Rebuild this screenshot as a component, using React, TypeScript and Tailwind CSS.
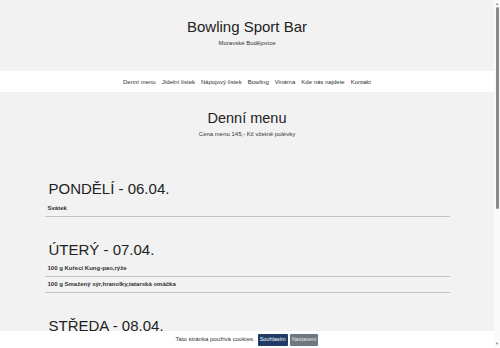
const navItems = ['Denní menu', 'Jídelní lístek', 'Nápojový lístek', 'Bowling', 'Vinárna', 'Kde nás najdete', 'Kontakt']

const days = [
  { name: 'PONDĚLÍ - 06.04.', items: ['Svátek'] },
  { name: 'ÚTERÝ - 07.04.', items: ['100 g Kuřecí Kung-pao,rýže', '100 g Smažený sýr,hranolky,tatarská omáčka'] },
  { name: 'STŘEDA - 08.04.', items: ['100 g Vepřový guláš,knedlík'] },
]

export default function App() {
  return (
    <div className="flex h-[348px] w-[500px] overflow-hidden bg-white font-['Liberation_Sans',Arial,sans-serif] text-[#222]">
      <div className="relative h-full flex-1 overflow-hidden bg-[#f2f2f2]">
        <header className="flex h-[71px] flex-col items-center pt-[18px]">
          <h1 className="text-[15px] leading-[18px]">Bowling Sport Bar</h1>
          <p className="mt-[3px] text-[6px] leading-[8px] text-[#333]">Moravské Budějovice</p>
        </header>

        <nav className="flex h-[21px] items-center justify-center gap-[6px] bg-white text-[6px] leading-[8px] text-[#333]">
          {navItems.map((n) => (
            <span key={n}>{n}</span>
          ))}
        </nav>

        <section className="flex flex-col items-center pt-[18px]">
          <h2 className="text-[14.5px] leading-[17px]">Denní menu</h2>
          <p className="mt-[3px] text-[6px] leading-[8px] text-[#333]">Cena menu 145,- Kč včetně polévky</p>
        </section>

        <div className="mx-auto mt-[42px] w-[405px]">
          {days.map((d, i) => (
            <div key={d.name} className={i > 0 ? 'mt-[24px]' : ''}>
              <h3 className="px-[4px] text-[15px] leading-[18px]">{d.name}</h3>
              <ul className="mt-[3px]">
                {d.items.map((it) => (
                  <li
                    key={it}
                    className="flex h-[15.5px] items-center border-b border-[#c4c4c4] px-[3px] text-[6px] font-bold leading-[7px] text-[#333]"
                  >
                    {it}
                  </li>
                ))}
              </ul>
            </div>
          ))}
        </div>

        <div className="absolute bottom-0 left-0 right-0 flex h-[17px] items-center justify-center gap-[2px] bg-white text-[6px] leading-[7px]">
          <span className="mr-[1px] text-[#333]">Tato stránka používá cookies.</span>
          <span className="flex h-[12px] items-center rounded-[1px] bg-[#1f3b66] px-[2px] text-[5.5px] text-white">Souhlasím</span>
          <span className="flex h-[12px] items-center rounded-[1px] bg-[#6f7780] px-[2px] text-[5.5px] text-[#e8e8e8]">Nastavení</span>
        </div>
      </div>

      <div className="flex h-full w-[6px] flex-col items-center bg-[#fafafa]">
        <span className="mt-[2px] text-[4px] leading-[4px] text-[#888]">▲</span>
        <div className="mt-[1px] h-[202px] w-[3px] rounded-full bg-[#8a8a8a]" />
        <div className="flex-1" />
        <span className="mb-[2px] text-[4px] leading-[4px] text-[#888]">▼</span>
      </div>
    </div>
  )
}
